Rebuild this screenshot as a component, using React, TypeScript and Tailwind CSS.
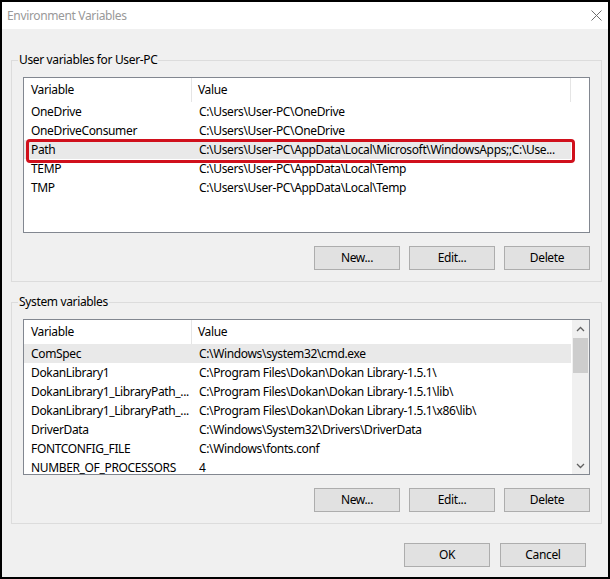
import React from "react";

type Row = { name: string; value: string };

const userVars: Row[] = [
  { name: "OneDrive", value: "C:\\Users\\User-PC\\OneDrive" },
  { name: "OneDriveConsumer", value: "C:\\Users\\User-PC\\OneDrive" },
  { name: "Path", value: "C:\\Users\\User-PC\\AppData\\Local\\Microsoft\\WindowsApps;;C:\\Use..." },
  { name: "TEMP", value: "C:\\Users\\User-PC\\AppData\\Local\\Temp" },
  { name: "TMP", value: "C:\\Users\\User-PC\\AppData\\Local\\Temp" },
];

const systemVars: Row[] = [
  { name: "ComSpec", value: "C:\\Windows\\system32\\cmd.exe" },
  { name: "DokanLibrary1", value: "C:\\Program Files\\Dokan\\Dokan Library-1.5.1\\" },
  { name: "DokanLibrary1_LibraryPath_...", value: "C:\\Program Files\\Dokan\\Dokan Library-1.5.1\\lib\\" },
  { name: "DokanLibrary1_LibraryPath_...", value: "C:\\Program Files\\Dokan\\Dokan Library-1.5.1\\x86\\lib\\" },
  { name: "DriverData", value: "C:\\Windows\\System32\\Drivers\\DriverData" },
  { name: "FONTCONFIG_FILE", value: "C:\\Windows\\fonts.conf" },
  { name: "NUMBER_OF_PROCESSORS", value: "4" },
];

function Button({ label }: { label: string }) {
  return (
    <button className="flex h-[24px] w-[86px] items-center justify-center border border-[#adadad] bg-[#e1e1e1] text-[12px] leading-none text-black">
      {label}
    </button>
  );
}

function Chevron({ up }: { up?: boolean }) {
  return (
    <svg width="9" height="6" viewBox="0 0 9 6" fill="none">
      <path
        d={up ? "M1 5 L4.5 1.5 L8 5" : "M1 1 L4.5 4.5 L8 1"}
        stroke="#606060"
        strokeWidth="1.3"
      />
    </svg>
  );
}

function VarList({
  rows,
  selected,
  scrollbar,
  marked,
}: {
  rows: Row[];
  selected: number;
  scrollbar?: boolean;
  marked?: boolean;
}) {
  return (
    <div className="relative flex h-[156px] w-[567px] overflow-hidden border border-[#828790] bg-white">
      <div className="flex w-[547px] flex-col">
        <div className="flex h-[24px] shrink-0 items-center">
          <div className="flex h-full w-[168px] items-center border-r border-[#e5e5e5] pl-[7px]">Variable</div>
          <div
            className={`flex h-full w-[379px] items-center pl-[6px] ${scrollbar ? "" : "border-r border-[#e5e5e5]"}`}
          >
            Value
          </div>
        </div>
        {rows.map((r, i) => (
          <div
            key={i}
            className={`flex h-[19px] shrink-0 items-center whitespace-nowrap ${i === selected ? "bg-[#e9e9e9]" : ""}`}
          >
            <div className="w-[168px] overflow-hidden pl-[7px]">{r.name}</div>
            <div className="w-[379px] overflow-hidden pl-[7px]">{r.value}</div>
          </div>
        ))}
      </div>
      {scrollbar ? (
        <div className="ml-auto flex w-[17px] flex-col items-center bg-[#f0f0f0]">
          <div className="flex h-[17px] items-center justify-center">
            <Chevron up />
          </div>
          <div className="mt-[1px] h-[35px] w-[15px] bg-[#cdcdcd]" />
          <div className="mt-auto flex h-[17px] items-center justify-center">
            <Chevron />
          </div>
        </div>
      ) : null}
      {marked ? (
        <div className="absolute left-[2px] top-[61px] h-[24px] w-[549px] rounded-[4px] border-[3px] border-[#d0101c]" />
      ) : null}
    </div>
  );
}

function Group({
  title,
  rows,
  selected,
  scrollbar,
  marked,
  className,
}: {
  title: string;
  rows: Row[];
  selected: number;
  scrollbar?: boolean;
  marked?: boolean;
  className?: string;
}) {
  return (
    <fieldset className={`w-[591px] border border-[#dcdcdc] px-[6px] pb-[11px] ${className ?? ""}`}>
      <legend className="px-[1px] text-[12px] leading-[16px]">{title}</legend>
      <div className="mt-[9px] px-[5px]">
        <VarList rows={rows} selected={selected} scrollbar={scrollbar} marked={marked} />
        <div className="mt-[13px] flex justify-end gap-[9px]">
          <Button label="New..." />
          <Button label="Edit..." />
          <Button label="Delete" />
        </div>
      </div>
    </fieldset>
  );
}

export default function App() {
  return (
    <div
      className="flex h-[579px] w-[610px] flex-col border-2 border-black bg-[#f0f0f0] text-[12px] tracking-[-0.35px] text-black"
      style={{ fontFamily: "'Noto Sans', 'Open Sans', sans-serif" }}
    >
      <div className="flex h-[27px] shrink-0 items-center justify-between bg-white pl-[5px] pr-[6px]">
        <span className="text-[12px] text-[#999999]">Environment Variables</span>
        <svg width="11" height="11" viewBox="0 0 11 11" fill="none">
          <path d="M0.5 0.5 L10.5 10.5 M10.5 0.5 L0.5 10.5" stroke="#6e6e6e" strokeWidth="1" />
        </svg>
      </div>
      <Group className="ml-[9px] mt-[23px]" title="User variables for User-PC" rows={userVars} selected={2} marked />
      <Group className="ml-[9px] mt-[12px]" title="System variables" rows={systemVars} selected={0} scrollbar />
      <div className="mt-[19px] flex justify-end gap-[10px] pr-[22px]">
        <Button label="OK" />
        <Button label="Cancel" />
      </div>
    </div>
  );
}
